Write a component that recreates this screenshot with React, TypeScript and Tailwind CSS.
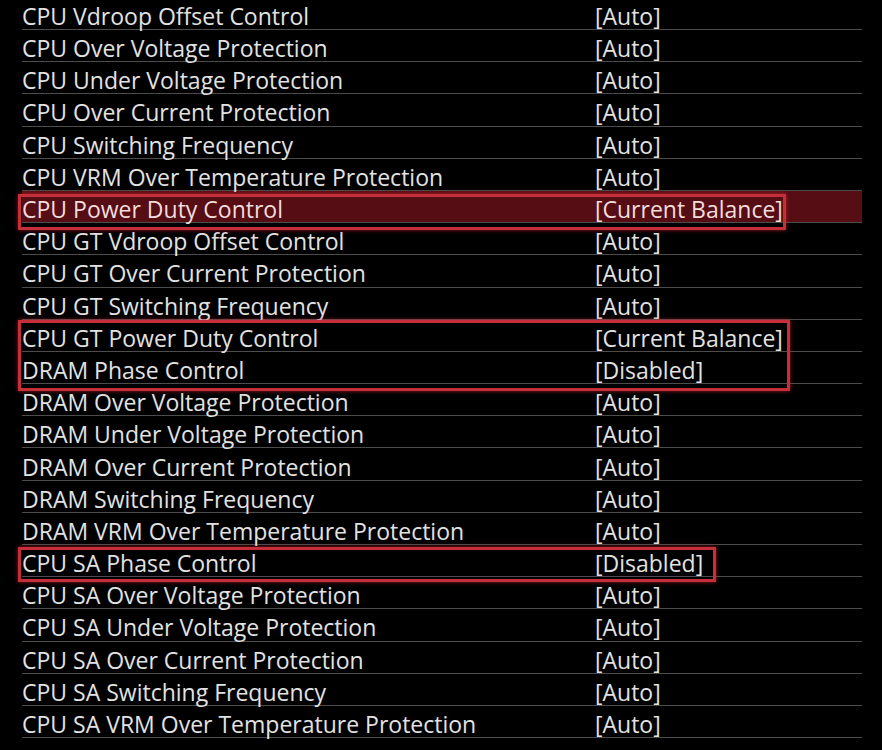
import React from 'react';

type Row = { label: string; value: string; active?: boolean };

const rows: Row[] = [
  { label: 'CPU Vdroop Offset Control', value: '[Auto]' },
  { label: 'CPU Over Voltage Protection', value: '[Auto]' },
  { label: 'CPU Under Voltage Protection', value: '[Auto]' },
  { label: 'CPU Over Current Protection', value: '[Auto]' },
  { label: 'CPU Switching Frequency', value: '[Auto]' },
  { label: 'CPU VRM Over Temperature Protection', value: '[Auto]' },
  { label: 'CPU Power Duty Control', value: '[Current Balance]', active: true },
  { label: 'CPU GT Vdroop Offset Control', value: '[Auto]' },
  { label: 'CPU GT Over Current Protection', value: '[Auto]' },
  { label: 'CPU GT Switching Frequency', value: '[Auto]' },
  { label: 'CPU GT Power Duty Control', value: '[Current Balance]' },
  { label: 'DRAM Phase Control', value: '[Disabled]' },
  { label: 'DRAM Over Voltage Protection', value: '[Auto]' },
  { label: 'DRAM Under Voltage Protection', value: '[Auto]' },
  { label: 'DRAM Over Current Protection', value: '[Auto]' },
  { label: 'DRAM Switching Frequency', value: '[Auto]' },
  { label: 'DRAM VRM Over Temperature Protection', value: '[Auto]' },
  { label: 'CPU SA Phase Control', value: '[Disabled]' },
  { label: 'CPU SA Over Voltage Protection', value: '[Auto]' },
  { label: 'CPU SA Under Voltage Protection', value: '[Auto]' },
  { label: 'CPU SA Over Current Protection', value: '[Auto]' },
  { label: 'CPU SA Switching Frequency', value: '[Auto]' },
  { label: 'CPU SA VRM Over Temperature Protection', value: '[Auto]' },
];

// red callout boxes drawn over the list
const marks = [
  { left: 18, top: 194, width: 768, height: 36 },
  { left: 18, top: 320, width: 772, height: 71 },
  { left: 18, top: 547, width: 698, height: 35 },
];

export default function App() {
  return (
    <div
      className="relative w-[882px] h-[750px] overflow-hidden bg-black text-[#e2e2e2]"
      style={{ fontFamily: '"Open Sans", "DejaVu Sans", sans-serif' }}
    >
      <div className="-mt-[2.2px] pl-[22px] w-[862px]">
        {rows.map((row) => (
          <div
            key={row.label}
            className={
              'flex items-center h-[32.2px] border-b border-[#4c4c4c] text-[23px] leading-none ' +
              (row.active ? 'bg-[#560d13] text-[#f2dcdc]' : '')
            }
          >
            <span className="w-[573px] pt-[6px]">{row.label}</span>
            <span className="pt-[6px]">{row.value}</span>
          </div>
        ))}
      </div>

      {marks.map((m, i) => (
        <div
          key={i}
          className="absolute border-[3px] border-[#c52f3a] shadow-[0_0_4px_rgba(220,40,50,0.7)]"
          style={{ left: m.left, top: m.top, width: m.width, height: m.height }}
        />
      ))}
    </div>
  );
}
